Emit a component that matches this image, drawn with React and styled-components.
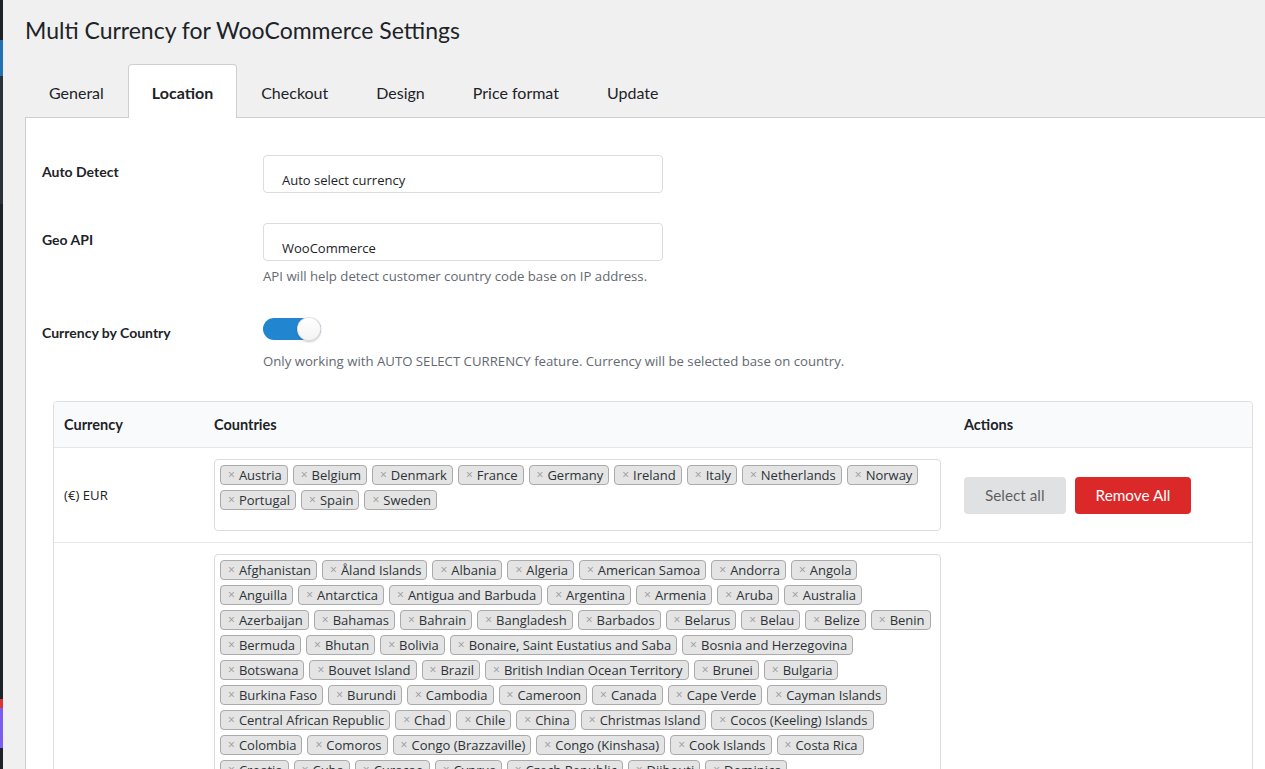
import React from 'react';
import styled, { createGlobalStyle } from 'styled-components';

const GlobalStyle = createGlobalStyle`
  * { box-sizing: border-box; }
  html, body { margin: 0; padding: 0; background: #f0f0f1; }
  body { font-family: Lato, "Open Sans", sans-serif; color: #1d2327; overflow: hidden; }
`;

const Page = styled.div`
  display: flex;
  min-height: 100vh;
`;

const AdminStrip = styled.div`
  width: 3px;
  flex-shrink: 0;
  background: linear-gradient(
    to bottom,
    #1d2327 0 40px,
    #2271b1 40px 76px,
    #2c3338 76px 204px,
    #1d2327 204px 699px,
    #d63638 699px 708px,
    #7b5cf0 708px 748px,
    #1d2327 748px
  );
`;

const Main = styled.main`
  flex: 1;
  min-width: 0;
  padding-left: 22px;
`;

const Title = styled.h1`
  margin: 15px 0 0;
  font: 400 23px/30px Lato, sans-serif;
  color: #1d2327;
`;

const Tabs = styled.nav`
  display: flex;
  height: 54px;
  margin-top: 19px;
  margin-bottom: -1px;
  position: relative;
  z-index: 1;
`;

const Tab = styled.div`
  display: flex;
  align-items: center;
  padding: 1px 23px 0;
  font: ${(p) => (p.$active ? 700 : 400)} 16px Lato, sans-serif;
  color: #1d2327;
  background: ${(p) => (p.$active ? '#fff' : 'transparent')};
  border: 1px solid ${(p) => (p.$active ? '#cfcfcf' : 'transparent')};
  border-bottom: none;
  border-radius: 4px 4px 0 0;
`;

const Panel = styled.section`
  background: #fff;
  border: 1px solid #cfcfcf;
  border-right: none;
  padding: 37px 12px 40px 16px;
  min-height: 700px;
`;

const FieldRow = styled.div`
  display: grid;
  grid-template-columns: 221px 400px;
  margin-top: ${(p) => p.$gap || 0}px;
`;

const Label = styled.div`
  padding-top: 7px;
  font: 700 14px/20px Lato, sans-serif;
  color: #1d2327;
`;

const Field = styled.div`
  display: flex;
  flex-direction: column;
  align-items: flex-start;
`;

const SelectBox = styled.div`
  width: 400px;
  height: 38px;
  border: 1px solid #dcdcde;
  border-radius: 4px;
  padding: 14px 18px 0;
  font: 400 13px/20px "Open Sans", sans-serif;
  color: #1d2327;
  background: #fff;
`;

const Hint = styled.div`
  margin-top: ${(p) => p.$top || 5}px;
  font: 400 13.2px/20px "Open Sans", sans-serif;
  color: #646970;
  white-space: nowrap;
`;

const Toggle = styled.div`
  position: relative;
  width: 58px;
  height: 24px;
  margin-top: 1px;
  display: flex;
  align-items: center;
`;

const Track = styled.div`
  width: 58px;
  height: 22px;
  border-radius: 11px;
  background: #2185d0;
`;

const Knob = styled.div`
  position: absolute;
  right: 0;
  top: 0;
  width: 24px;
  height: 24px;
  border-radius: 50%;
  background: linear-gradient(#fff, #f3f3f3);
  box-shadow: 0 1px 2px rgba(34, 36, 38, 0.25), 0 0 0 1px rgba(34, 36, 38, 0.12) inset;
`;

const Table = styled.div`
  margin: 30px 0 0 11px;
  border: 1px solid #dededf;
  border-radius: 4px;
  overflow: hidden;
`;

const Row = styled.div`
  display: grid;
  grid-template-columns: 149px 749px 1fr;
  align-items: center;
  background: ${(p) => (p.$head ? '#f9fafb' : '#fff')};
  min-height: ${(p) => (p.$head ? '46px' : 'auto')};
  border-bottom: 1px solid #e6e6e7;
`;

const HeadCell = styled.div`
  padding: 0 11px 0 ${(p) => p.$pl || 11}px;
  font: 700 14.5px/20px Lato, sans-serif;
  color: #1d2327;
`;

const Cell = styled.div`
  padding: 11px 11px 11px ${(p) => p.$pl || 11}px;
  font: 400 13.2px/20px "Open Sans", sans-serif;
  color: #1d2327;
`;

const TagBox = styled.div`
  border: 1px solid #dcdcde;
  border-radius: 4px;
  padding: 0 10px 20px 5px;
  background: #fff;
`;

const TagLine = styled.div`
  display: flex;
  gap: 5px;
  margin-top: 5px;
  white-space: nowrap;
`;

const Tag = styled.span`
  display: inline-flex;
  align-items: center;
  height: 20px;
  padding: 0 5px 0 6px;
  border: 1px solid #aaa;
  border-radius: 4px;
  background: #e4e4e4;
  font: 400 13px/18px "Open Sans", sans-serif;
  color: #2c3338;
`;

const Remove = styled.span`
  color: #999;
  font-size: 12px;
  margin-right: 4px;
  margin-left: 1px;
`;

const Actions = styled.div`
  display: flex;
  gap: 9px;
  padding-left: 12px;
`;

const Button = styled.button`
  height: 37px;
  padding: 0 21px;
  border: none;
  border-radius: 4px;
  font: 400 15.3px Lato, sans-serif;
  cursor: pointer;
  background: ${(p) => (p.$danger ? '#db2828' : '#e0e1e2')};
  color: ${(p) => (p.$danger ? '#fff' : 'rgba(0,0,0,0.6)')};
`;

const eurLines = [
  ['Austria', 'Belgium', 'Denmark', 'France', 'Germany', 'Ireland', 'Italy', 'Netherlands', 'Norway'],
  ['Portugal', 'Spain', 'Sweden'],
];

const otherLines = [
  ['Afghanistan', 'Åland Islands', 'Albania', 'Algeria', 'American Samoa', 'Andorra', 'Angola'],
  ['Anguilla', 'Antarctica', 'Antigua and Barbuda', 'Argentina', 'Armenia', 'Aruba', 'Australia'],
  ['Azerbaijan', 'Bahamas', 'Bahrain', 'Bangladesh', 'Barbados', 'Belarus', 'Belau', 'Belize', 'Benin'],
  ['Bermuda', 'Bhutan', 'Bolivia', 'Bonaire, Saint Eustatius and Saba', 'Bosnia and Herzegovina'],
  ['Botswana', 'Bouvet Island', 'Brazil', 'British Indian Ocean Territory', 'Brunei', 'Bulgaria'],
  ['Burkina Faso', 'Burundi', 'Cambodia', 'Cameroon', 'Canada', 'Cape Verde', 'Cayman Islands'],
  ['Central African Republic', 'Chad', 'Chile', 'China', 'Christmas Island', 'Cocos (Keeling) Islands'],
  ['Colombia', 'Comoros', 'Congo (Brazzaville)', 'Congo (Kinshasa)', 'Cook Islands', 'Costa Rica'],
  ['Croatia', 'Cuba', 'Curaçao', 'Cyprus', 'Czech Republic', 'Djibouti', 'Dominica'],
  ['Dominican Republic', 'Ecuador', 'Egypt', 'El Salvador', 'Equatorial Guinea', 'Eritrea', 'Estonia'],
  ['Eswatini', 'Ethiopia', 'Falkland Islands', 'Faroe Islands', 'Fiji', 'Finland', 'French Guiana'],
  ['French Polynesia', 'French Southern Territories', 'Gabon', 'Gambia', 'Georgia', 'Ghana'],
  ['Gibraltar', 'Greece', 'Greenland', 'Grenada', 'Guadeloupe', 'Guam', 'Guatemala', 'Guernsey'],
  ['Guinea', 'Guinea-Bissau', 'Guyana', 'Haiti', 'Heard Island and McDonald Islands', 'Honduras'],
  ['Hong Kong', 'Hungary', 'Iceland', 'India', 'Indonesia', 'Iran', 'Iraq', 'Isle of Man', 'Israel'],
  ['Ivory Coast', 'Jamaica', 'Japan', 'Jersey', 'Jordan', 'Kazakhstan', 'Kenya', 'Kiribati'],
  ['Kosovo', 'Kuwait', 'Kyrgyzstan', 'Laos', 'Latvia', 'Lebanon', 'Lesotho', 'Liberia', 'Libya'],
  ['Liechtenstein', 'Lithuania', 'Luxembourg', 'Macao', 'Madagascar', 'Malawi', 'Malaysia'],
  ['Maldives', 'Mali', 'Malta', 'Marshall Islands', 'Martinique', 'Mauritania', 'Mauritius'],
  ['Mayotte', 'Mexico', 'Micronesia', 'Moldova', 'Monaco', 'Mongolia', 'Montenegro', 'Montserrat'],
  ['Morocco', 'Mozambique', 'Myanmar', 'Namibia', 'Nauru', 'Nepal', 'New Caledonia'],
  ['New Zealand', 'Nicaragua', 'Niger', 'Nigeria', 'Niue', 'Norfolk Island', 'North Korea'],
  ['North Macedonia', 'Northern Mariana Islands', 'Oman', 'Pakistan', 'Palestinian Territory'],
  ['Panama', 'Papua New Guinea', 'Paraguay', 'Peru', 'Philippines', 'Pitcairn', 'Poland'],
  ['Puerto Rico', 'Qatar', 'Reunion', 'Romania', 'Russia', 'Rwanda', 'Saint Barthélemy'],
];

const tabs = ['General', 'Location', 'Checkout', 'Design', 'Price format', 'Update'];

function TagList({ lines }) {
  return (
    <TagBox>
      {lines.map((line, i) => (
        <TagLine key={i}>
          {line.map((c) => (
            <Tag key={c}>
              <Remove>×</Remove>
              {c}
            </Tag>
          ))}
        </TagLine>
      ))}
    </TagBox>
  );
}

export default function App() {
  return (
    <>
      <GlobalStyle />
      <Page>
        <AdminStrip />
        <Main>
          <Title>Multi Currency for WooCommerce Settings</Title>
          <Tabs>
            {tabs.map((t) => (
              <Tab key={t} $active={t === 'Location'}>
                {t}
              </Tab>
            ))}
          </Tabs>
          <Panel>
            <FieldRow>
              <Label>Auto Detect</Label>
              <Field>
                <SelectBox>Auto select currency</SelectBox>
              </Field>
            </FieldRow>
            <FieldRow $gap={30}>
              <Label>Geo API</Label>
              <Field>
                <SelectBox>WooCommerce</SelectBox>
                <Hint>API will help detect customer country code base on IP address.</Hint>
              </Field>
            </FieldRow>
            <FieldRow $gap={30}>
              <Label>Currency by Country</Label>
              <Field>
                <Toggle>
                  <Track />
                  <Knob />
                </Toggle>
                <Hint $top={10}>
                  Only working with AUTO SELECT CURRENCY feature. Currency will be selected base on country.
                </Hint>
              </Field>
            </FieldRow>
            <Table>
              <Row $head>
                <HeadCell $pl={10}>Currency</HeadCell>
                <HeadCell>Countries</HeadCell>
                <HeadCell $pl={12}>Actions</HeadCell>
              </Row>
              <Row>
                <Cell $pl={10}>(€) EUR</Cell>
                <Cell>
                  <TagList lines={eurLines} />
                </Cell>
                <Actions>
                  <Button>Select all</Button>
                  <Button $danger>Remove All</Button>
                </Actions>
              </Row>
              <Row>
                <Cell $pl={10}>($) USD</Cell>
                <Cell>
                  <TagList lines={otherLines} />
                </Cell>
                <Actions>
                  <Button>Select all</Button>
                  <Button $danger>Remove All</Button>
                </Actions>
              </Row>
            </Table>
          </Panel>
        </Main>
      </Page>
    </>
  );
}
